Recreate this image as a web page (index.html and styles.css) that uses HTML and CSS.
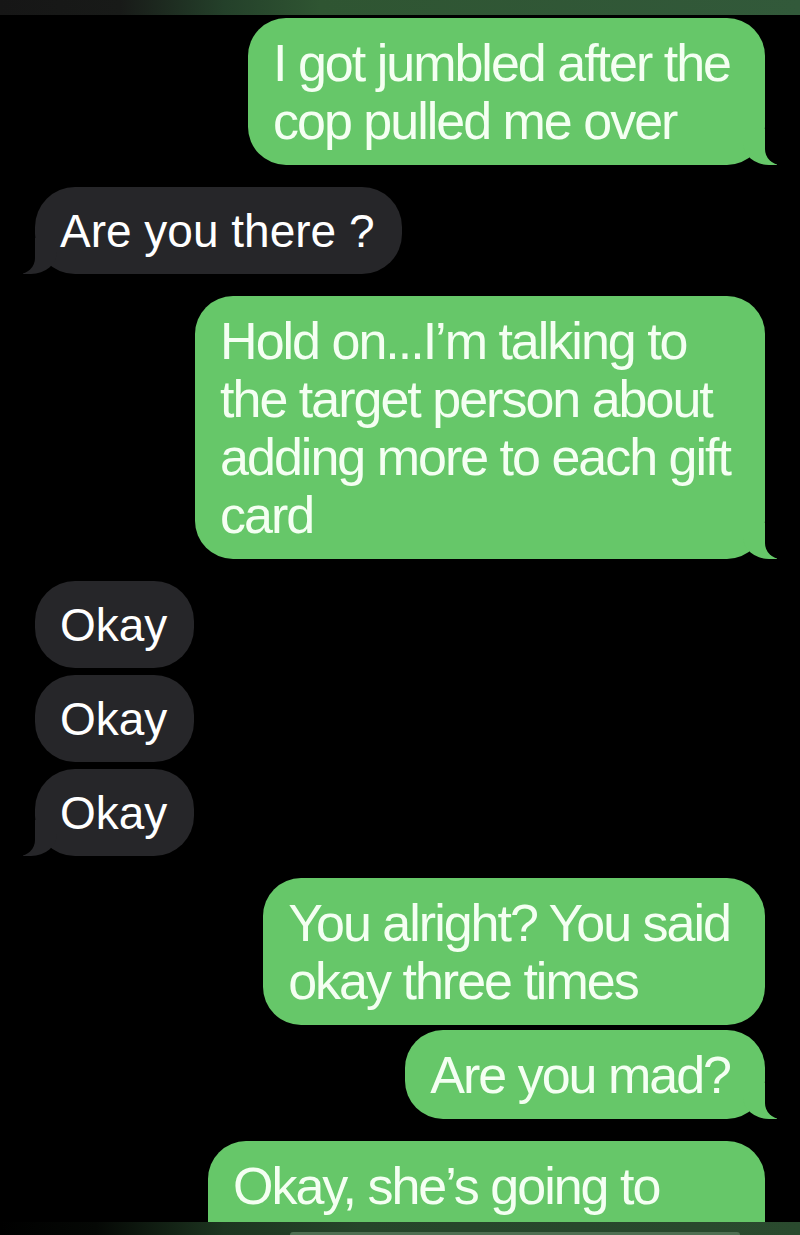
FILE: index.html
```html
<!DOCTYPE html>
<html lang="en">
<head>
<meta charset="utf-8">
<title>Messages</title>
<link rel="stylesheet" href="styles.css">
</head>
<body>
<div class="screen">
  <div class="bar bar-top"></div>
  <div class="chat">
    <div class="msg sent tail">I got jumbled after the<br>cop pulled me over</div>
    <div class="msg recv tail">Are you there ?</div>
    <div class="msg sent tail">Hold on...I’m talking to<br>the target person about<br>adding more to each gift<br>card</div>
    <div class="msg recv">Okay</div>
    <div class="msg recv cont">Okay</div>
    <div class="msg recv cont tail">Okay</div>
    <div class="msg sent">You alright? You said<br>okay three times</div>
    <div class="msg sent tail cont-tight">Are you mad?</div>
    <div class="msg sent last">Okay, she’s going to</div>
  </div>
  <div class="bar bar-bottom"><div class="bar-pill"></div></div>
</div>
</body>
</html>
```
FILE: styles.css
```css
html, body {
  margin: 0;
  padding: 0;
  background: #000;
}

.screen {
  width: 800px;
  height: 1235px;
  display: flex;
  flex-direction: column;
  overflow: hidden;
  background: #000;
}

.bar {
  flex: none;
}

.bar-top {
  height: 15px;
  background: linear-gradient(90deg, #161616 0%, #181a18 15%, #24402a 28%, #2f5532 40%, #32593a 100%);
}

.bar-bottom {
  height: 13px;
  display: flex;
  align-items: flex-end;
  padding-left: 290px;
  background: linear-gradient(90deg, #000 0%, #050805 12%, #1d3520 28%, #26452a 45%, #2a4a2e 100%);
}

.bar-pill {
  width: 450px;
  height: 3px;
  border-radius: 3px 3px 0 0;
  background: #4f6f52;
}

.chat {
  flex: 1;
  min-height: 0;
  overflow: hidden;
  display: flex;
  flex-direction: column;
  padding: 3px 35px 0;
}

.msg {
  position: relative;
  flex: none;
  color: #fff;
  margin-top: 22px;
}

.msg:first-child {
  margin-top: 0;
}

.msg.cont {
  margin-top: 7px;
}

.msg.cont-tight {
  margin-top: 5px;
}

.sent {
  align-self: flex-end;
  background: #66c769;
  color: #f4fff2;
  font-family: "Liberation Sans", Arial, sans-serif;
  font-size: 52px;
  line-height: 58px;
  letter-spacing: -2px;
  padding: 16px 35px 15px 25px;
  border-radius: 38px;
}

.recv {
  align-self: flex-start;
  background: #262629;
  font-family: "Liberation Sans", Arial, sans-serif;
  font-size: 46px;
  line-height: 56px;
  padding: 16px 27px 15px 25px;
  border-radius: 40px;
}

.sent.last {
  width: 557px;
  box-sizing: border-box;
  padding-bottom: 80px;
}

/* bubble tails */
.tail::before,
.tail::after {
  content: "";
  position: absolute;
  bottom: 0;
  height: 36px;
}

.sent.tail::before {
  right: -12px;
  width: 34px;
  background: #66c769;
  border-bottom-left-radius: 26px 22px;
}

.sent.tail::after {
  right: -44px;
  width: 44px;
  background: #000;
  border-bottom-left-radius: 16px;
}

.recv.tail::before {
  left: -12px;
  width: 34px;
  background: #262629;
  border-bottom-right-radius: 26px 22px;
}

.recv.tail::after {
  left: -44px;
  width: 44px;
  background: #000;
  border-bottom-right-radius: 16px;
}
```
